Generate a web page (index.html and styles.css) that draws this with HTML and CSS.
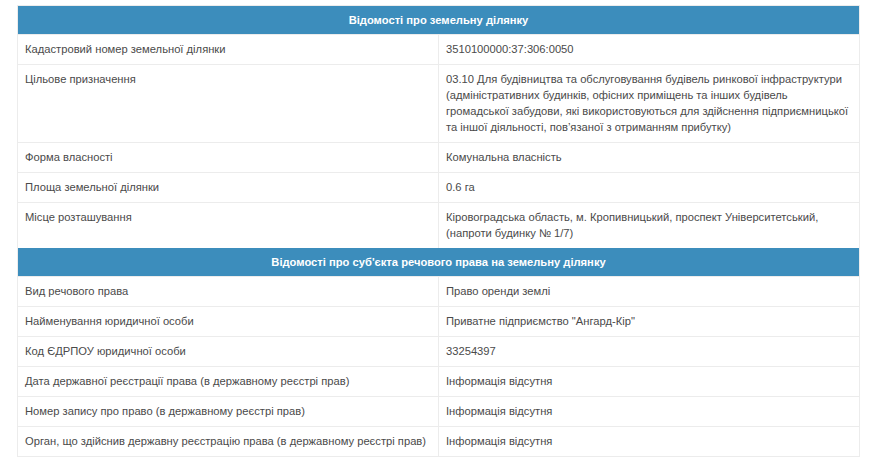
FILE: index.html
```html
<!DOCTYPE html>
<html lang="uk">
  <head>
    <meta charset="UTF-8" />
    <meta name="viewport" content="width=device-width, initial-scale=1.0" />
    <title>Відомості про земельну ділянку</title>
    <link rel="stylesheet" href="styles.css">
  </head>
  <body>
    <div class="wrap">
      <table class="info-table">
        <!-- Ділянка -->
        <tr class="section">
          <th colspan="2">Відомості про земельну ділянку</th>
        </tr>
        <tr>
          <td>Кадастровий номер земельної ділянки</td>
          <td>3510100000:37:306:0050</td>
        </tr>
        <tr>
          <td>Цільове призначення</td>
          <td>03.10 Для будівництва та обслуговування будівель ринкової інфраструктури (адміністративних будинків, офісних приміщень та інших будівель громадської забудови, які використовуються для здійснення підприємницької та іншої діяльності, пов’язаної з отриманням прибутку)</td>
        </tr>
        <tr>
          <td>Форма власності</td>
          <td>Комунальна власність</td>
        </tr>
        <tr>
          <td>Площа земельної ділянки</td>
          <td>0.6 га</td>
        </tr>
        <tr>
          <td>Місце розташування</td>
          <td>Кіровоградська область, м. Кропивницький, проспект Університетський, (напроти будинку № 1/7)</td>
        </tr>
        <!-- Суб'єкт права -->
        <tr class="section">
          <th colspan="2">Відомості про суб'єкта речового права на земельну ділянку</th>
        </tr>
        <tr>
          <td>Вид речового права</td>
          <td>Право оренди землі</td>
        </tr>
        <tr>
          <td>Найменування юридичної особи</td>
          <td>Приватне підприємство "Ангард-Кір"</td>
        </tr>
        <tr>
          <td>Код ЄДРПОУ юридичної особи</td>
          <td>33254397</td>
        </tr>
        <tr>
          <td>Дата державної реєстрації права (в державному реєстрі прав)</td>
          <td>Інформація відсутня</td>
        </tr>
        <tr>
          <td>Номер запису про право (в державному реєстрі прав)</td>
          <td>Інформація відсутня</td>
        </tr>
        <tr>
          <td>Орган, що здійснив державну реєстрацію права (в державному реєстрі прав)</td>
          <td>Інформація відсутня</td>
        </tr>
      </table>
    </div>
  </body>
</html>
```

FILE: styles.css
```css
body {
  font-family: "Liberation Sans", Arial, sans-serif;
  margin: 0;
  padding: 0;
  background: #fff;
  color: #4a4a4a;
}
.wrap {
  padding: 5px 15px 0 17px;
}
.info-table {
  width: 100%;
  border-collapse: collapse;
  font-size: 11.2px;
  line-height: 16px;
  border: 1px solid #ececec;
}
.info-table td {
  width: 50%;
  padding: 6px 10px 7px 7px;
  border-top: 1px solid #ececec;
  border-left: 1px solid #ececec;
  vertical-align: top;
}
.section th {
  background: #3c8dbc;
  color: #fff;
  font-weight: bold;
  text-align: center;
  padding: 6px 7px;
}
```
